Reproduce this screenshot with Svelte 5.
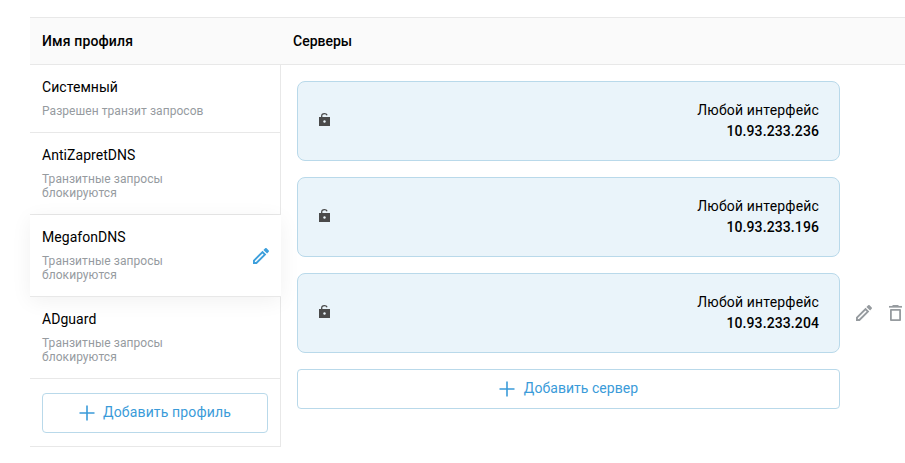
<script>
  const profiles = [
    { name: 'Системный', note: 'Разрешен транзит запросов' },
    { name: 'AntiZapretDNS', note: 'Транзитные запросы блокируются' },
    { name: 'MegafonDNS', note: 'Транзитные запросы блокируются', active: true },
    { name: 'ADguard', note: 'Транзитные запросы блокируются' }
  ];
  const servers = [
    { ip: '10.93.233.236' },
    { ip: '10.93.233.196' },
    { ip: '10.93.233.204', actions: true }
  ];
</script>

{#snippet pencil()}
  <svg class="pencil" width="16" height="16" viewBox="0 0 16 16" fill="currentColor">
    <path fill-rule="evenodd" d="M0 12.2V16h3.8L13.3 6.5 9.5 2.7zM3 14.1H1.9V13l7.6-7.6 1.1 1.1z" />
    <path d="M15.7 2.4 13.6.3a1 1 0 0 0-1.4 0l-1.8 1.6 3.7 3.7 1.6-1.8a1 1 0 0 0 0-1.4z" />
  </svg>
{/snippet}

{#snippet plus()}
  <svg class="plus" width="16" height="16" viewBox="0 0 16 16" fill="none" stroke="currentColor" stroke-width="1.6">
    <path d="M8 .5v15M.5 8h15" />
  </svg>
{/snippet}

<div class="table">
  <header>
    <div class="col-profile">Имя профиля</div>
    <div>Серверы</div>
  </header>
  <div class="body">
    <aside>
      {#each profiles as p}
        <div class="profile" class:active={p.active}>
          <div class="info">
            <div class="name">{p.name}</div>
            <div class="note">{p.note}</div>
          </div>
          {#if p.active}{@render pencil()}{/if}
        </div>
      {/each}
      <div class="add">
        <button class="wide">{@render plus()}<span>Добавить профиль</span></button>
      </div>
    </aside>
    <main>
      {#each servers as s}
        <div class="row">
          <div class="card">
            <svg width="12" height="13" viewBox="0 0 12 13">
              <path d="M2.7 4.2V3.1Q2.7.7 5.4.7q2.1 0 2.7 1.6" fill="none" stroke="#4a4a4a" stroke-width="1.3" />
              <path d="M0 4h11v9H0z" fill="#4a4a4a" />
              <circle cx="5.5" cy="8.5" r="1.2" fill="#ebf5fb" />
            </svg>
            <div class="address">
              <div class="iface">Любой интерфейс</div>
              <strong>{s.ip}</strong>
            </div>
          </div>
          {#if s.actions}
            <div class="actions">
              {@render pencil()}
              <svg width="13" height="16" viewBox="0 0 13 16" fill="none" stroke="currentColor">
                <path d="M0 1.8h13" stroke-width="1.7" />
                <path d="M3.5.6h6" stroke-width="1.2" />
                <path d="M1.9 4.9h9.2v10.2H1.9z" stroke-width="1.8" stroke-linejoin="round" />
              </svg>
            </div>
          {/if}
        </div>
      {/each}
      <button>{@render plus()}<span>Добавить сервер</span></button>
    </main>
  </div>
</div>

<style>
  :global(body) {
    background: #fff;
    overflow: hidden;
  }
  .table {
    margin: 17px 0 0 30px;
    font: 14px/21px Roboto, sans-serif;
    color: #000;
    width: 875px;
  }
  header {
    display: flex;
    box-sizing: border-box;
    height: 48px;
    align-items: center;
    border-top: 1px solid #e8e8e8;
    border-bottom: 1px solid #e8e8e8;
    background: #fafafa;
    font-weight: 500;
  }
  .col-profile {
    width: 251px;
    padding-left: 12px;
    letter-spacing: 0.15px;
  }
  .body {
    display: flex;
  }
  aside {
    box-sizing: border-box;
    width: 251px;
    flex: none;
    border-right: 1px solid #e8e8e8;
  }
  .profile {
    display: flex;
    align-items: center;
    justify-content: space-between;
    padding: 12px 12px 14px;
    border-bottom: 1px solid #e8e8e8;
  }
  .profile.active {
    position: relative;
    margin-right: -1px;
    background: #fff;
    box-shadow: 0 4px 20px rgba(0, 0, 0, 0.06);
  }
  .profile .pencil {
    color: #3d9fdc;
    margin-top: 2px;
  }
  .info {
    width: 165px;
  }
  .name {
    letter-spacing: 0.05px;
  }
  .note {
    margin-top: 6px;
    font-size: 12px;
    line-height: 14px;
    letter-spacing: 0.06px;
    color: #969b9f;
  }
  .add {
    padding: 14px 12px 13px;
    border-bottom: 1px solid #e8e8e8;
  }
  button {
    display: flex;
    align-items: center;
    justify-content: center;
    gap: 9px;
    box-sizing: border-box;
    width: 100%;
    height: 40px;
    padding: 0 0 1px;
    border: 1px solid #b9d9ea;
    border-radius: 4px;
    background: #fff;
    color: #3a9bd9;
    font: inherit;
    letter-spacing: 0.04px;
  }
  .wide {
    gap: 8px;
    letter-spacing: 0.14px;
  }
  .plus {
    margin-top: 1px;
  }
  main {
    width: 543px;
    padding: 16px 0 0 16px;
  }
  .row {
    display: flex;
    align-items: center;
    margin-bottom: 16px;
  }
  .card {
    display: flex;
    align-items: center;
    justify-content: space-between;
    box-sizing: border-box;
    width: 543px;
    height: 80px;
    flex: none;
    padding: 0 20px 0 21px;
    border: 1px solid #b9d9ea;
    border-radius: 8px;
    background: #eaf4fa;
  }
  .card svg {
    margin-top: -3px;
  }
  .address {
    text-align: right;
  }
  .iface {
    letter-spacing: 0.17px;
  }
  strong {
    font-weight: 500;
    letter-spacing: 0.1px;
  }
  .actions {
    display: flex;
    gap: 17px;
    margin-left: 16px;
    color: #969b9f;
  }
</style>
